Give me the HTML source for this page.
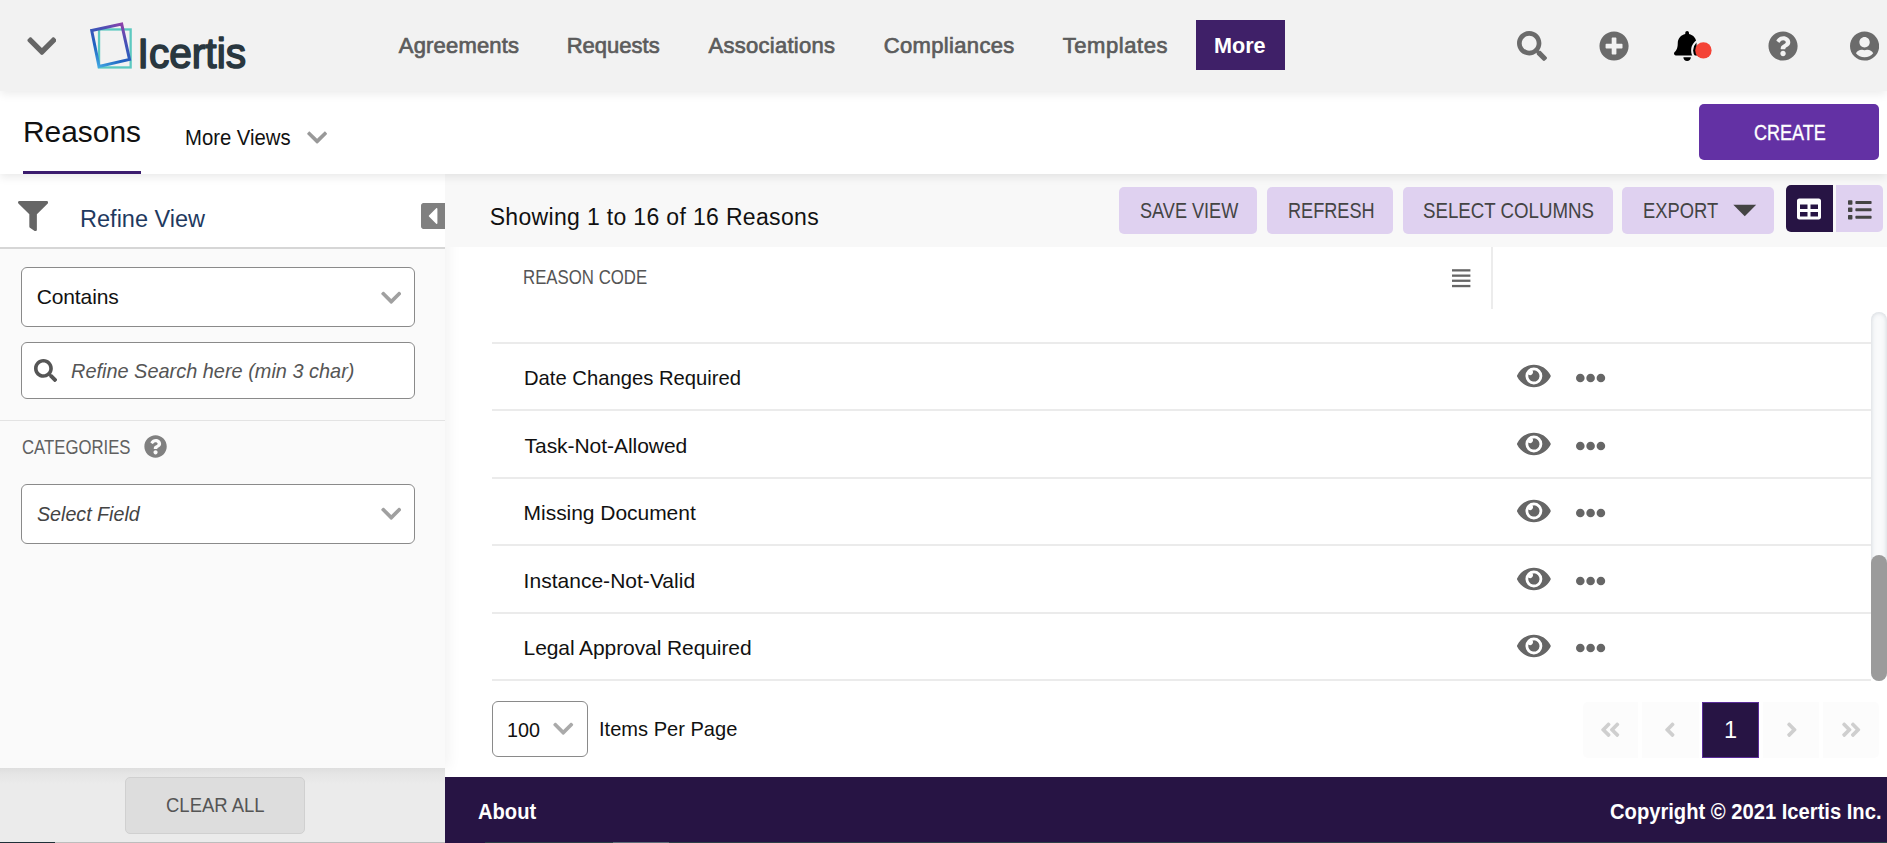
<!DOCTYPE html>
<html lang="en"><head><meta charset="utf-8"><title>Reasons - Icertis</title>
<style>
html,body{margin:0;padding:0}
body{width:1887px;height:843px;overflow:hidden;position:relative;background:#fff;font-family:'Liberation Sans', sans-serif}
.a{position:absolute;box-sizing:border-box;margin:0;padding:0}
.w{position:absolute;left:0;top:0;width:0;height:0;margin:0;padding:0;list-style:none}
.t{position:absolute;white-space:pre;line-height:1;font-family:'Liberation Sans', sans-serif;transform-origin:0 50%;margin:0;font-weight:normal}
button.a{border:0;font:inherit;cursor:pointer;display:block;overflow:visible}
a.t{text-decoration:none}
</style></head><body>
<main class="w">
<div class="w" role="grid" aria-label="Reasons">
<div class="w" role="row">
<span class="t" role="columnheader" style="left:522.7px;top:267.0px;font-size:20px;transform:scaleX(0.8401);color:#555">REASON CODE</span>
<svg class="a" aria-hidden="true" style="left:1452px;top:269px" width="19" height="19" viewBox="0 0 19 19"><rect x="0" y="0.2" width="18.4" height="2.3" fill="#666"/><rect x="0" y="5.5" width="18.4" height="2.3" fill="#666"/><rect x="0" y="10.6" width="18.4" height="2.3" fill="#666"/><rect x="0" y="15.9" width="18.4" height="2.3" fill="#666"/></svg><i class="a" style="left:1491px;top:247px;width:2px;height:62px;background:#ececec"></i>
</div>
<div class="a" style="left:492px;top:342px;width:1379px;height:2px;background:#ebebeb"></div>
<div class="w" role="row">
<span class="t" role="gridcell" style="left:523.6px;top:366.8px;font-size:21px;transform:scaleX(0.9629);color:#111">Date Changes Required</span>
<button class="w" type="button" aria-label="View" style="border:0;background:none">
<svg class="a" aria-hidden="true" style="left:1517.00px;top:360.60px" width="33.75" height="30.00" viewBox="0 0 576 512"><path fill="#666" d="M572.520 241.400C518.290 135.590 410.930 64 288 64S57.680 135.640 3.480 241.410a32.350 32.350 0 0 0 0 29.190C57.710 376.410 165.070 448 288 448s230.320-71.640 284.520-177.410a32.350 32.350 0 0 0 0-29.190zM288 400a144 144 0 1 1 144-144 143.930 143.930 0 0 1-144 144zm0-240a95.310 95.310 0 0 0-25.310 3.790 47.850 47.850 0 0 1-66.900 66.900A95.780 95.780 0 1 0 288 160z"/></svg></button>
<button class="w" type="button" aria-label="More actions" style="border:0;background:none">
<svg class="a" aria-hidden="true" style="left:1575px;top:372.80px" width="32" height="10" viewBox="0 0 32 10"><circle cx="5.3" cy="5" r="4.3" fill="#666"/><circle cx="15.6" cy="5" r="4.3" fill="#666"/><circle cx="25.9" cy="5" r="4.3" fill="#666"/></svg>
</button>
<div class="a" style="left:492px;top:409px;width:1379px;height:2px;background:#ebebeb"></div>
</div>
<div class="w" role="row">
<span class="t" role="gridcell" style="left:524.6px;top:434.7px;font-size:21px;letter-spacing:-0.053px;color:#111">Task-Not-Allowed</span>
<button class="w" type="button" aria-label="View" style="border:0;background:none">
<svg class="a" aria-hidden="true" style="left:1517.00px;top:428.60px" width="33.75" height="30.00" viewBox="0 0 576 512"><path fill="#666" d="M572.520 241.400C518.290 135.590 410.930 64 288 64S57.680 135.640 3.480 241.410a32.350 32.350 0 0 0 0 29.190C57.710 376.410 165.070 448 288 448s230.320-71.640 284.520-177.410a32.350 32.350 0 0 0 0-29.190zM288 400a144 144 0 1 1 144-144 143.930 143.930 0 0 1-144 144zm0-240a95.310 95.310 0 0 0-25.310 3.790 47.850 47.850 0 0 1-66.900 66.900A95.780 95.780 0 1 0 288 160z"/></svg></button>
<button class="w" type="button" aria-label="More actions" style="border:0;background:none">
<svg class="a" aria-hidden="true" style="left:1575px;top:440.80px" width="32" height="10" viewBox="0 0 32 10"><circle cx="5.3" cy="5" r="4.3" fill="#666"/><circle cx="15.6" cy="5" r="4.3" fill="#666"/><circle cx="25.9" cy="5" r="4.3" fill="#666"/></svg>
</button>
<div class="a" style="left:492px;top:477px;width:1379px;height:2px;background:#ebebeb"></div>
</div>
<div class="w" role="row">
<span class="t" role="gridcell" style="left:523.6px;top:501.6px;font-size:21px;letter-spacing:-0.040px;color:#111">Missing Document</span>
<button class="w" type="button" aria-label="View" style="border:0;background:none">
<svg class="a" aria-hidden="true" style="left:1517.00px;top:495.50px" width="33.75" height="30.00" viewBox="0 0 576 512"><path fill="#666" d="M572.520 241.400C518.290 135.590 410.930 64 288 64S57.680 135.640 3.480 241.410a32.350 32.350 0 0 0 0 29.190C57.710 376.410 165.070 448 288 448s230.320-71.640 284.520-177.410a32.350 32.350 0 0 0 0-29.190zM288 400a144 144 0 1 1 144-144 143.930 143.930 0 0 1-144 144zm0-240a95.310 95.310 0 0 0-25.310 3.790 47.850 47.850 0 0 1-66.900 66.900A95.780 95.780 0 1 0 288 160z"/></svg></button>
<button class="w" type="button" aria-label="More actions" style="border:0;background:none">
<svg class="a" aria-hidden="true" style="left:1575px;top:507.70px" width="32" height="10" viewBox="0 0 32 10"><circle cx="5.3" cy="5" r="4.3" fill="#666"/><circle cx="15.6" cy="5" r="4.3" fill="#666"/><circle cx="25.9" cy="5" r="4.3" fill="#666"/></svg>
</button>
<div class="a" style="left:492px;top:544px;width:1379px;height:2px;background:#ebebeb"></div>
</div>
<div class="w" role="row">
<span class="t" role="gridcell" style="left:523.6px;top:569.5px;font-size:21px;letter-spacing:0.018px;color:#111">Instance-Not-Valid</span>
<button class="w" type="button" aria-label="View" style="border:0;background:none">
<svg class="a" aria-hidden="true" style="left:1517.00px;top:563.60px" width="33.75" height="30.00" viewBox="0 0 576 512"><path fill="#666" d="M572.520 241.400C518.290 135.590 410.930 64 288 64S57.680 135.640 3.480 241.410a32.350 32.350 0 0 0 0 29.190C57.710 376.410 165.070 448 288 448s230.320-71.640 284.520-177.410a32.350 32.350 0 0 0 0-29.190zM288 400a144 144 0 1 1 144-144 143.930 143.930 0 0 1-144 144zm0-240a95.310 95.310 0 0 0-25.310 3.790 47.850 47.850 0 0 1-66.900 66.900A95.780 95.780 0 1 0 288 160z"/></svg></button>
<button class="w" type="button" aria-label="More actions" style="border:0;background:none">
<svg class="a" aria-hidden="true" style="left:1575px;top:575.80px" width="32" height="10" viewBox="0 0 32 10"><circle cx="5.3" cy="5" r="4.3" fill="#666"/><circle cx="15.6" cy="5" r="4.3" fill="#666"/><circle cx="25.9" cy="5" r="4.3" fill="#666"/></svg>
</button>
<div class="a" style="left:492px;top:612px;width:1379px;height:2px;background:#ebebeb"></div>
</div>
<div class="w" role="row">
<span class="t" role="gridcell" style="left:523.6px;top:636.6px;font-size:21px;letter-spacing:-0.091px;color:#111">Legal Approval Required</span>
<button class="w" type="button" aria-label="View" style="border:0;background:none">
<svg class="a" aria-hidden="true" style="left:1517.00px;top:630.60px" width="33.75" height="30.00" viewBox="0 0 576 512"><path fill="#666" d="M572.520 241.400C518.290 135.590 410.930 64 288 64S57.680 135.640 3.480 241.410a32.350 32.350 0 0 0 0 29.190C57.710 376.410 165.070 448 288 448s230.320-71.640 284.520-177.410a32.350 32.350 0 0 0 0-29.190zM288 400a144 144 0 1 1 144-144 143.930 143.930 0 0 1-144 144zm0-240a95.310 95.310 0 0 0-25.310 3.790 47.850 47.850 0 0 1-66.900 66.900A95.780 95.780 0 1 0 288 160z"/></svg></button>
<button class="w" type="button" aria-label="More actions" style="border:0;background:none">
<svg class="a" aria-hidden="true" style="left:1575px;top:642.80px" width="32" height="10" viewBox="0 0 32 10"><circle cx="5.3" cy="5" r="4.3" fill="#666"/><circle cx="15.6" cy="5" r="4.3" fill="#666"/><circle cx="25.9" cy="5" r="4.3" fill="#666"/></svg>
</button>
<div class="a" style="left:492px;top:679px;width:1379px;height:2px;background:#ebebeb"></div>
</div>
<div class="a" style="left:1871px;top:312px;width:16px;height:369px;background:#f9fafb;border-radius:8px;box-shadow:inset 0 0 5px rgba(120,135,150,.35)"><div class="a" style="left:0px;top:243px;width:16px;height:126px;background:#9b9b9b;border-radius:8px"></div>
</div>
<div class="w">
<div class="a" role="combobox" aria-label="Items per page" style="left:492px;top:701px;width:96px;height:56px;background:#fff;border:1px solid #8a8a8a;border-radius:6px"><span class="t" style="left:13.7px;top:16.7px;font-size:21px;transform:scaleX(0.9412);color:#111">100</span><svg class="a" aria-hidden="true" style="left:60.24px;top:15.24px" width="20.52" height="23.45" viewBox="0 0 448 512"><path fill="#aaa" d="M207.029 381.476L12.686 187.132c-9.373-9.373-9.373-24.569 0-33.941l22.667-22.667c9.357-9.357 24.522-9.375 33.901-.04L224 284.505l154.745-154.021c9.379-9.335 24.544-9.317 33.901.04l22.667 22.667c9.373 9.373 9.373 24.569 0 33.941L240.971 381.476c-9.373 9.372-24.569 9.372-33.942 0z"/></svg></div>
<label class="t" style="left:598.5px;top:718.2px;font-size:21px;transform:scaleX(0.9559);color:#111">Items Per Page</label>
<nav class="w" aria-label="Pagination">
<button class="a" type="button" aria-label="First page" disabled style="left:1583px;top:702px;width:55px;height:56px;background:#fcfcfc;border-radius:5px 0 0 5px"><svg class="a" aria-hidden="true" style="left:17.28px;top:15.72px" width="20.44" height="23.36" viewBox="0 0 448 512"><path fill="#cfcfcf" d="M223.7 239l136-136c9.400-9.400 24.600-9.400 33.900 0l22.600 22.600c9.400 9.400 9.400 24.600 0 33.900L319.900 256l96.400 96.400c9.400 9.400 9.400 24.600 0 33.900L393.700 409c-9.400 9.400-24.600 9.400-33.900 0l-136-136c-9.500-9.400-9.500-24.600-.1-34zm-192 34l136 136c9.400 9.400 24.600 9.400 33.900 0l22.600-22.600c9.400-9.400 9.400-24.600 0-33.900L127.900 256l96.400-96.400c9.400-9.400 9.400-24.600 0-33.900L201.700 103c-9.400-9.400-24.600-9.400-33.900 0l-136 136c-9.500 9.400-9.500 24.600-.1 34z"/></svg></button>
<button class="a" type="button" aria-label="Previous page" disabled style="left:1642px;top:702px;width:57px;height:56px;background:#fcfcfc;border-radius:0"><svg class="a" aria-hidden="true" style="left:22.48px;top:15.72px" width="11.68" height="23.36" viewBox="0 0 256 512"><path fill="#cfcfcf" d="M31.700 239l136-136c9.400-9.400 24.600-9.400 33.900 0l22.600 22.600c9.400 9.400 9.400 24.600 0 33.900L127.900 256l96.400 96.400c9.400 9.400 9.400 24.600 0 33.900L201.700 409c-9.400 9.400-24.600 9.400-33.900 0l-136-136c-9.500-9.400-9.500-24.600-.1-34z"/></svg></button>
<button class="a" type="button" aria-current="page" style="left:1702px;top:702px;width:57px;height:56px;background:#271444;border:1px solid #5a2d99"><span class="t" style="left:21.0px;top:16.4px;font-size:23.6px;letter-spacing:0.000px;color:#fff">1</span></button>
<button class="a" type="button" aria-label="Next page" disabled style="left:1763px;top:702px;width:56px;height:56px;background:#fcfcfc;border-radius:0"><svg class="a" aria-hidden="true" style="left:22.94px;top:15.72px" width="11.68" height="23.36" viewBox="0 0 256 512"><path fill="#cfcfcf" transform="translate(256,0) scale(-1,1)" d="M31.700 239l136-136c9.400-9.400 24.600-9.400 33.900 0l22.600 22.600c9.400 9.400 9.400 24.600 0 33.900L127.900 256l96.400 96.400c9.400 9.400 9.400 24.600 0 33.900L201.700 409c-9.400 9.400-24.600 9.400-33.900 0l-136-136c-9.500-9.400-9.500-24.600-.1-34z"/></svg></button>
<button class="a" type="button" aria-label="Last page" disabled style="left:1823px;top:702px;width:56px;height:56px;background:#fcfcfc;border-radius:0 5px 5px 0"><svg class="a" aria-hidden="true" style="left:18.18px;top:15.72px" width="20.44" height="23.36" viewBox="0 0 448 512"><path fill="#cfcfcf" transform="translate(448,0) scale(-1,1)" d="M223.7 239l136-136c9.400-9.400 24.600-9.400 33.900 0l22.600 22.600c9.400 9.400 9.400 24.600 0 33.900L319.900 256l96.400 96.400c9.400 9.400 9.400 24.600 0 33.900L393.700 409c-9.400 9.400-24.600 9.400-33.900 0l-136-136c-9.500-9.400-9.500-24.600-.1-34zm-192 34l136 136c9.400 9.400 24.600 9.400 33.900 0l22.600-22.600c9.400-9.400 9.400-24.600 0-33.900L127.900 256l96.400-96.400c9.400-9.400 9.400-24.600 0-33.900L201.700 103c-9.400-9.400-24.600-9.400-33.900 0l-136 136c-9.500 9.400-9.500 24.600-.1 34z"/></svg></button>
</nav>
</div>
</div>
</main>
<aside class="w" aria-label="Refine View">
<div class="a" style="left:0px;top:174px;width:445px;height:594px;background:#fafafa;box-shadow:3px 0 14px rgba(0,0,0,.06)"></div>
<div class="a" style="left:0px;top:174px;width:445px;height:75px;background:#fff;border-bottom:2px solid #d6d6d6"><svg class="a" aria-hidden="true" style="left:17.50px;top:26.70px" width="30.20" height="30.20" viewBox="0 0 512 512"><path fill="#666" d="M487.976 0H24.028C2.710 0-8.047 25.866 7.058 40.971L192 225.941V432c0 7.831 3.821 15.170 10.237 19.662l80 55.980C298.020 518.690 320 507.493 320 487.980V225.941l184.947-184.970C520.021 25.896 509.338 0 487.976 0z"/></svg><h2 class="t" style="left:80.1px;top:33.7px;font-size:23.5px;letter-spacing:-0.010px;color:#1f3a5f">Refine View</h2><button type="button" aria-label="Collapse panel" class="a" style="left:421px;top:28.69999999999999px;width:24px;height:26.3px;overflow:hidden;background:none"><svg class="a" aria-hidden="true" style="left:0.00px;top:-1.90px" width="26.25" height="30.00" viewBox="0 0 448 512"><path fill="#808080" d="M400 480H48c-26.510 0-48-21.490-48-48V80c0-26.510 21.490-48 48-48h352c26.510 0 48 21.490 48 48v352c0 26.510-21.490 48-48 48zM259.515 124.485l-123.030 123.030c-4.686 4.686-4.686 12.284 0 16.971l123.030 123.030c7.560 7.560 20.485 2.206 20.485-8.485V132.971c0-10.691-12.926-16.045-20.485-8.486z"/></svg></button></div>
<div class="a" role="combobox" aria-label="Match type" style="left:21px;top:267px;width:394px;height:60px;background:#fff;border:1px solid #8a8a8a;border-radius:6px"><span class="t" style="left:14.7px;top:17.7px;font-size:21px;letter-spacing:-0.114px;color:#111">Contains</span><svg class="a" aria-hidden="true" style="left:358.74px;top:17.94px" width="20.52" height="23.45" viewBox="0 0 448 512"><path fill="#a0a0a0" d="M207.029 381.476L12.686 187.132c-9.373-9.373-9.373-24.569 0-33.941l22.667-22.667c9.357-9.357 24.522-9.375 33.901-.04L224 284.505l154.745-154.021c9.379-9.335 24.544-9.317 33.901.04l22.667 22.667c9.373 9.373 9.373 24.569 0 33.941L240.971 381.476c-9.373 9.372-24.569 9.372-33.942 0z"/></svg></div>
<div class="a" role="search" style="left:21px;top:342px;width:394px;height:57px;background:#fff;border:1px solid #8a8a8a;border-radius:6px"><svg class="a" aria-hidden="true" style="left:12.30px;top:15.80px" width="23.20" height="23.20" viewBox="0 0 512 512"><path fill="#555" d="M505 442.7L405.3 343c-4.500-4.500-10.600-7-17-7H372c27.600-35.300 44-79.700 44-128C416 93.100 322.900 0 208 0S0 93.100 0 208s93.100 208 208 208c48.300 0 92.700-16.400 128-44v16.300c0 6.400 2.500 12.500 7 17l99.700 99.700c9.400 9.400 24.600 9.400 33.900 0l28.300-28.300c9.400-9.400 9.400-24.600.1-34zM208 336c-70.700 0-128-57.200-128-128 0-70.700 57.200-128 128-128 70.700 0 128 57.200 128 128 0 70.700-57.200 128-128 128z"/></svg><span class="t" style="left:48.8px;top:16.8px;font-size:21px;font-style:italic;transform:scaleX(0.9487);color:#555">Refine Search here (min 3 char)</span></div>
<hr class="a" style="left:0px;top:420px;width:445px;height:1px;background:#e3e3e3;border:0"></hr>
<h3 class="t" style="left:22.0px;top:436.9px;font-size:20.3px;transform:scaleX(0.8252);color:#606060">CATEGORIES</h3><svg class="a" aria-hidden="true" style="left:144.10px;top:435.30px" width="23.12" height="23.12" viewBox="0 0 512 512"><path fill="#808080" d="M504 256c0 136.997-111.043 248-248 248S8 392.997 8 256C8 119.083 119.043 8 256 8s248 111.083 248 248zM262.655 90c-54.497 0-89.255 22.957-116.549 63.758-3.536 5.286-2.353 12.415 2.715 16.258l34.699 26.310c5.205 3.947 12.621 3.008 16.665-2.122 17.864-22.658 30.113-35.797 57.303-35.797 20.429 0 45.698 13.148 45.698 32.958 0 14.976-12.363 22.667-32.534 33.976C247.128 238.528 216 254.941 216 296v4c0 6.627 5.373 12 12 12h56c6.627 0 12-5.373 12-12v-1.333c0-28.462 83.186-29.647 83.186-106.667 0-58.002-60.165-102-116.531-102zM256 338c-25.365 0-46 20.635-46 46 0 25.364 20.635 46 46 46s46-20.636 46-46c0-25.365-20.635-46-46-46z"/></svg>
<div class="a" role="combobox" aria-label="Category field" style="left:21px;top:484px;width:394px;height:60px;background:#fff;border:1px solid #8a8a8a;border-radius:6px"><span class="t" style="left:14.5px;top:17.7px;font-size:21px;font-style:italic;transform:scaleX(0.9360);color:#444">Select Field</span><svg class="a" aria-hidden="true" style="left:358.74px;top:16.94px" width="20.52" height="23.45" viewBox="0 0 448 512"><path fill="#a0a0a0" d="M207.029 381.476L12.686 187.132c-9.373-9.373-9.373-24.569 0-33.941l22.667-22.667c9.357-9.357 24.522-9.375 33.901-.04L224 284.505l154.745-154.021c9.379-9.335 24.544-9.317 33.901.04l22.667 22.667c9.373 9.373 9.373 24.569 0 33.941L240.971 381.476c-9.373 9.372-24.569 9.372-33.942 0z"/></svg></div>
<div class="a" style="left:0px;top:768px;width:445px;height:75px;background:linear-gradient(#dedede,#e5e5e5 6px,#ebebeb 16px)"><button class="a" type="button" style="left:125px;top:9px;width:180px;height:57px;background:#dddddd;border:1px solid #d0d0d0;border-radius:5px"><span class="t" style="left:40.2px;top:17.4px;font-size:20.5px;transform:scaleX(0.9018);color:#555">CLEAR ALL</span></button>
<i class="a" style="left:0px;top:74px;width:55px;height:1px;background:#1f3038"></i>
<i class="a" style="left:55px;top:74px;width:390px;height:1px;background:#bdbdbd"></i>
</div>
</aside>
<section class="w" role="toolbar" aria-label="Grid actions">
<div class="a" style="left:445px;top:174px;width:1442px;height:73px;background:#f8f8f8"></div>
<p class="t" style="left:489.7px;top:205.5px;font-size:23px;letter-spacing:0.332px;color:#111">Showing 1 to 16 of 16 Reasons</p>
<button class="a" type="button" style="left:1119px;top:187px;width:138px;height:47px;background:#dfd1f0;border-radius:5px"><span class="t" style="left:20.9px;top:13.9px;font-size:21.5px;transform:scaleX(0.8422);color:#444">SAVE VIEW</span></button>
<button class="a" type="button" style="left:1267px;top:187px;width:126px;height:47px;background:#dfd1f0;border-radius:5px"><span class="t" style="left:20.9px;top:13.9px;font-size:21.5px;transform:scaleX(0.8426);color:#444">REFRESH</span></button>
<button class="a" type="button" style="left:1403px;top:187px;width:210px;height:47px;background:#dfd1f0;border-radius:5px"><span class="t" style="left:20.1px;top:13.9px;font-size:21.5px;transform:scaleX(0.8687);color:#444">SELECT COLUMNS</span></button>
<button class="a" type="button" style="left:1622px;top:187px;width:152px;height:47px;background:#dfd1f0;border-radius:5px"><span class="t" style="left:20.6px;top:13.9px;font-size:21.5px;transform:scaleX(0.8540);color:#444">EXPORT</span><svg class="a" aria-hidden="true" style="left:111px;top:17px" width="24" height="14" viewBox="0 0 24 14"><polygon points="0.3,0.8 23.2,0.8 11.75,12.3" fill="#444"/></svg></button>
<button class="a" type="button" aria-label="Grid view" aria-pressed="true" style="left:1786px;top:185px;width:47px;height:47px;background:#271444;border-radius:5px 0 0 5px"><svg class="a" aria-hidden="true" style="left:11.40px;top:12.40px" width="24.00" height="24.00" viewBox="0 0 512 512"><path fill="#fff" d="M464 32H48C21.490 32 0 53.490 0 80v352c0 26.510 21.490 48 48 48h416c26.510 0 48-21.490 48-48V80c0-26.510-21.490-48-48-48zM224 416H64v-96h160v96zm0-160H64v-96h160v96zm224 160H288v-96h160v96zm0-160H288v-96h160v96z"/></svg></button>
<button class="a" type="button" aria-label="List view" style="left:1836px;top:185px;width:47px;height:47px;background:#dfd1f0;border-radius:0 5px 5px 0"><svg class="a" aria-hidden="true" style="left:12.00px;top:12.50px" width="23.60" height="23.60" viewBox="0 0 512 512"><path fill="#444" d="M80 368H16a16 16 0 0 0-16 16v64a16 16 0 0 0 16 16h64a16 16 0 0 0 16-16v-64a16 16 0 0 0-16-16zm0-320H16A16 16 0 0 0 0 64v64a16 16 0 0 0 16 16h64a16 16 0 0 0 16-16V64a16 16 0 0 0-16-16zm0 160H16a16 16 0 0 0-16 16v64a16 16 0 0 0 16 16h64a16 16 0 0 0 16-16v-64a16 16 0 0 0-16-16zm416 176H176a16 16 0 0 0-16 16v32a16 16 0 0 0 16 16h320a16 16 0 0 0 16-16v-32a16 16 0 0 0-16-16zm0-320H176a16 16 0 0 0-16 16v32a16 16 0 0 0 16 16h320a16 16 0 0 0 16-16V80a16 16 0 0 0-16-16zm0 160H176a16 16 0 0 0-16 16v32a16 16 0 0 0 16 16h320a16 16 0 0 0 16-16v-32a16 16 0 0 0-16-16z"/></svg></button>
</section>
<footer class="w">
<div class="a" style="left:445px;top:777px;width:1442px;height:66px;background:#271444"><a class="t" style="left:33.3px;top:23.6px;font-size:21.2px;font-weight:bold;transform:scaleX(0.9500);color:#fff">About</a><span class="t" style="left:1164.9px;top:23.6px;font-size:21.2px;font-weight:bold;transform:scaleX(0.9518);color:#fff">Copyright © 2021 Icertis Inc.</span><i class="a" style="left:40px;top:65px;width:1402px;height:1px;background:#2c4048"></i>
<i class="a" style="left:168px;top:65px;width:56px;height:1px;background:#5d6d78"></i>
</div>
</footer>
<section class="w" aria-label="Page header">
<div class="a" style="left:0px;top:91px;width:1887px;height:83px;background:#fff;box-shadow:0 3px 9px rgba(0,0,0,.09)"><h1 class="t" style="left:22.9px;top:24.9px;font-size:30.4px;transform:scaleX(0.9838);color:#111">Reasons</h1><i class="a" style="left:23px;top:80px;width:118px;height:3px;background:#3b1c6e"></i>
<span class="t" style="left:185.2px;top:37.0px;font-size:21.3px;transform:scaleX(0.9527);color:#111">More Views</span><svg class="a" aria-hidden="true" style="left:306.75px;top:35.02px" width="20.21" height="23.10" viewBox="0 0 448 512"><path fill="#999" d="M207.029 381.476L12.686 187.132c-9.373-9.373-9.373-24.569 0-33.941l22.667-22.667c9.357-9.357 24.522-9.375 33.901-.04L224 284.505l154.745-154.021c9.379-9.335 24.544-9.317 33.901.04l22.667 22.667c9.373 9.373 9.373 24.569 0 33.941L240.971 381.476c-9.373 9.372-24.569 9.372-33.942 0z"/></svg><button class="a" type="button" style="left:1699px;top:13px;width:180px;height:56px;background:#6331a4;border-radius:5px"><span class="t" style="left:54.8px;top:18.1px;font-size:22.1px;-webkit-text-stroke:0.35px #fff;transform:scaleX(0.8159);color:#fff">CREATE</span></button>
</div>
</section>
<header class="w">
<div class="a" style="left:0px;top:0px;width:1887px;height:91px;background:#f2f2f2;box-shadow:0 3px 9px rgba(0,0,0,.08)"><button class="w" type="button" aria-label="Toggle menu" style="border:0;background:none">
<svg class="a" aria-hidden="true" style="left:26.63px;top:29.26px" width="29.85" height="34.12" viewBox="0 0 448 512"><path fill="#666" d="M207.029 381.476L12.686 187.132c-9.373-9.373-9.373-24.569 0-33.941l22.667-22.667c9.357-9.357 24.522-9.375 33.901-.04L224 284.505l154.745-154.021c9.379-9.335 24.544-9.317 33.901.04l22.667 22.667c9.373 9.373 9.373 24.569 0 33.941L240.971 381.476c-9.373 9.372-24.569 9.372-33.942 0z"/></svg></button>
<svg class="a" role="img" aria-label="Icertis" style="left:80px;top:15px" width="180" height="65" viewBox="80 15 180 65">
<defs><linearGradient id="lg" gradientUnits="userSpaceOnUse" x1="97" y1="68" x2="124" y2="22">
<stop offset="0" stop-color="#45aee6"/><stop offset=".35" stop-color="#1f62c0"/><stop offset=".7" stop-color="#4a4fb5"/><stop offset="1" stop-color="#9a3fa8"/></linearGradient></defs>
<rect x="99.05" y="29.45" width="31.6" height="38" fill="none" stroke="#5cc9c0" stroke-width="2.3"/>
<polygon points="91.7,30.5 121.7,24.1 129.5,59.4 99.0,66.4" fill="none" stroke="url(#lg)" stroke-width="3" stroke-linejoin="miter"/>
<text x="137.6" y="68.2" font-family="'Liberation Sans', sans-serif" font-size="42" fill="#29373f" stroke="#29373f" stroke-width="1.6" stroke-linejoin="round" textLength="108.4" lengthAdjust="spacingAndGlyphs">Icertis</text>
</svg>
<nav class="w" aria-label="Main">
<a class="t" style="left:398.8px;top:34.9px;font-size:22px;-webkit-text-stroke:0.7px #5c5c5c;letter-spacing:0.178px;color:#5c5c5c">Agreements</a>
<a class="t" style="left:566.7px;top:34.9px;font-size:22px;-webkit-text-stroke:0.7px #5c5c5c;letter-spacing:0.014px;color:#5c5c5c">Requests</a>
<a class="t" style="left:708.6px;top:34.9px;font-size:22px;-webkit-text-stroke:0.7px #5c5c5c;letter-spacing:0.255px;color:#5c5c5c">Associations</a>
<a class="t" style="left:883.7px;top:34.9px;font-size:22px;-webkit-text-stroke:0.7px #5c5c5c;letter-spacing:0.350px;color:#5c5c5c">Compliances</a>
<a class="t" style="left:1062.7px;top:34.9px;font-size:22px;-webkit-text-stroke:0.7px #5c5c5c;letter-spacing:0.575px;color:#5c5c5c">Templates</a>
<a class="a" style="left:1196px;top:20px;width:89px;height:50px;background:#3f2068;display:block"><span class="t" style="left:18.4px;top:15.0px;font-size:22px;font-weight:bold;transform:scaleX(0.9824);color:#fff">More</span></a>
</nav>
<div class="w">
<button class="w" type="button" aria-label="Search" style="border:0;background:none">
<svg class="a" aria-hidden="true" style="left:1516.80px;top:30.80px" width="30.00" height="30.00" viewBox="0 0 512 512"><path fill="#6b6b6b" d="M505 442.7L405.3 343c-4.500-4.500-10.600-7-17-7H372c27.600-35.300 44-79.700 44-128C416 93.100 322.900 0 208 0S0 93.100 0 208s93.100 208 208 208c48.300 0 92.700-16.400 128-44v16.300c0 6.400 2.500 12.500 7 17l99.700 99.700c9.400 9.400 24.600 9.400 33.900 0l28.300-28.300c9.400-9.400 9.400-24.600.1-34zM208 336c-70.700 0-128-57.200-128-128 0-70.700 57.200-128 128-128 70.700 0 128 57.200 128 128 0 70.700-57.200 128-128 128z"/></svg></button>
<button class="w" type="button" aria-label="Create new" style="border:0;background:none">
<svg class="a" aria-hidden="true" style="left:1599.35px;top:30.50px" width="30.10" height="30.10" viewBox="0 0 512 512"><path fill="#6b6b6b" d="M256 8C119 8 8 119 8 256s111 248 248 248 248-111 248-248S393 8 256 8zm144 276c0 6.600-5.400 12-12 12h-92v92c0 6.600-5.400 12-12 12h-56c-6.600 0-12-5.400-12-12v-92h-92c-6.600 0-12-5.400-12-12v-56c0-6.600 5.400-12 12-12h92v-92c0-6.600 5.400-12 12-12h56c6.600 0 12 5.400 12 12v92h92c6.600 0 12 5.400 12 12v56z"/></svg></button>
<button class="w" type="button" aria-label="Notifications" style="border:0;background:none">
<svg class="a" aria-hidden="true" style="left:1674.40px;top:30.80px" width="26.25" height="30.00" viewBox="0 0 448 512"><path fill="#000" d="M224 512c35.320 0 63.970-28.650 63.970-64H160.030c0 35.350 28.650 64 63.970 64zm215.390-149.710c-19.320-20.760-55.470-51.990-55.470-154.290 0-77.700-54.480-139.900-127.940-155.160V32c0-17.670-14.320-32-31.980-32s-31.980 14.330-31.980 32v20.840C118.560 68.100 64.080 130.300 64.080 208c0 102.300-36.150 133.530-55.470 154.290-6 6.450-8.660 14.160-8.610 21.710.11 16.400 12.980 32 32.100 32h383.800c19.120 0 32-15.600 32.100-32 .05-7.550-2.610-15.270-8.610-21.710z"/></svg><svg class="a" aria-hidden="true" style="left:1690px;top:37px" width="28" height="28" viewBox="0 0 28 28"><circle cx="13.4" cy="13.4" r="11.3" fill="none" stroke="#f2f2f2" stroke-width="2"/><circle cx="13.4" cy="13.4" r="8.2" fill="#f44336"/></svg></button>
<button class="w" type="button" aria-label="Help" style="border:0;background:none">
<svg class="a" aria-hidden="true" style="left:1767.80px;top:30.50px" width="30.10" height="30.10" viewBox="0 0 512 512"><path fill="#6b6b6b" d="M504 256c0 136.997-111.043 248-248 248S8 392.997 8 256C8 119.083 119.043 8 256 8s248 111.083 248 248zM262.655 90c-54.497 0-89.255 22.957-116.549 63.758-3.536 5.286-2.353 12.415 2.715 16.258l34.699 26.310c5.205 3.947 12.621 3.008 16.665-2.122 17.864-22.658 30.113-35.797 57.303-35.797 20.429 0 45.698 13.148 45.698 32.958 0 14.976-12.363 22.667-32.534 33.976C247.128 238.528 216 254.941 216 296v4c0 6.627 5.373 12 12 12h56c6.627 0 12-5.373 12-12v-1.333c0-28.462 83.186-29.647 83.186-106.667 0-58.002-60.165-102-116.531-102zM256 338c-25.365 0-46 20.635-46 46 0 25.364 20.635 46 46 46s46-20.636 46-46c0-25.365-20.635-46-46-46z"/></svg></button>
<button class="w" type="button" aria-label="Account" style="border:0;background:none">
<svg class="a" aria-hidden="true" style="left:1850.27px;top:30.50px" width="29.16" height="30.10" viewBox="0 0 496 512"><path fill="#6b6b6b" d="M248 8C111 8 0 119 0 256s111 248 248 248 248-111 248-248S385 8 248 8zm0 96c48.600 0 88 39.400 88 88s-39.400 88-88 88-88-39.400-88-88 39.400-88 88-88zm0 344c-58.700 0-111.300-26.600-146.500-68.200 18.800-35.400 55.600-59.800 98.500-59.800 2.400 0 4.800.4 7.100 1.100 13 4.200 26.600 6.900 40.900 6.900 14.300 0 28-2.700 40.900-6.900 2.300-.7 4.700-1.100 7.100-1.100 42.900 0 79.700 24.400 98.500 59.800C359.300 421.400 306.700 448 248 448z"/></svg></button>
</div>
</div>
</header>
</body></html>
